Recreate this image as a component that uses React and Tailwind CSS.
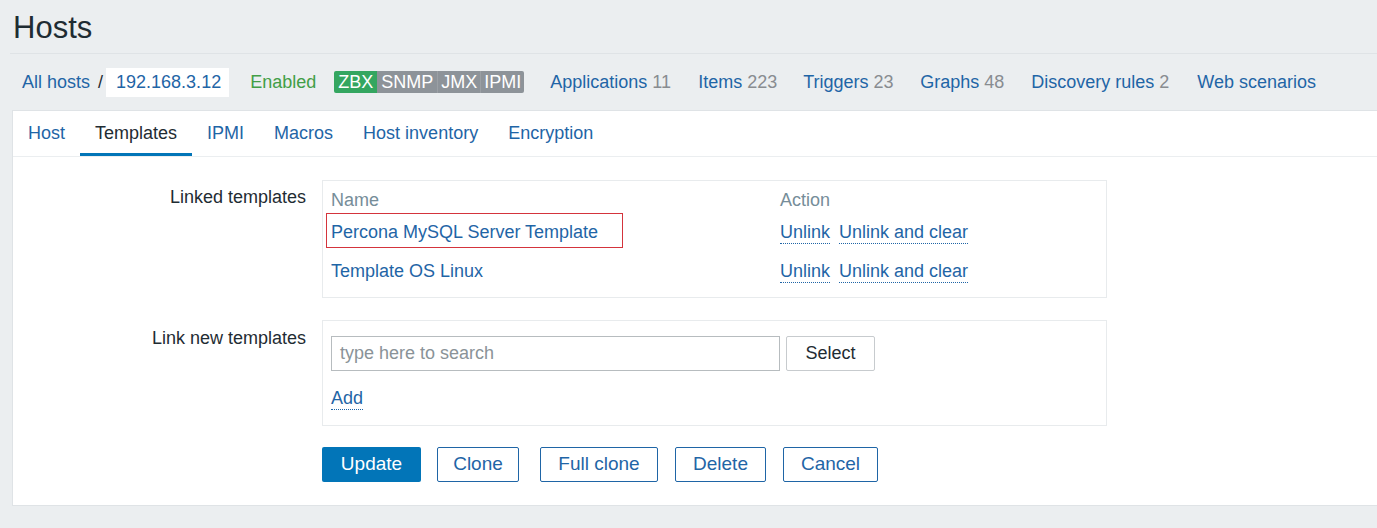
export default function App() {
  const font = { fontFamily: '"Liberation Sans", Arial, sans-serif' };
  const nav = [
    ["Applications", "11", "w-[148px]"],
    ["Items", "223", "w-[105px]"],
    ["Triggers", "23", "w-[117px]"],
    ["Graphs", "48", "w-[111px]"],
    ["Discovery rules", "2", "w-[166px]"],
    ["Web scenarios", null, ""],
  ];
  const tabs = ["Host", "Templates", "IPMI", "Macros", "Host inventory", "Encryption"];
  const ActionLinks = () => (
    <div className="pl-[4px] flex text-[#1f65a6] mt-[3px]">
      <span className="leading-[21px] border-b border-dotted border-[#1f65a6]">Unlink</span>
      <span className="ml-[9px] leading-[21px] border-b border-dotted border-[#1f65a6]">Unlink and clear</span>
    </div>
  );
  return (
    <div style={font} className="w-[1377px] h-[528px] bg-[#ebeef0] text-[18px] text-[#1f2c33] overflow-hidden">
      {/* Title */}
      <div className="pl-[13px] pt-[10px] pb-[6px] h-[53px]">
        <h1 className="text-[31px] leading-[36px] font-normal text-[#1f2c33]">Hosts</h1>
      </div>
      <div className="ml-[10px] border-t border-[#dfe3e6]" />
      {/* Nav row */}
      <div className="h-[56px] flex items-center pl-[22px] whitespace-nowrap">
        <span className="text-[#1f65a6]">All hosts</span>
        <span className="ml-[8px] mr-[3px] text-[#1f2c33]">/</span>
        <span className="h-[29px] flex items-center bg-white pl-[10px] pr-[8px] text-[#1f65a6]">192.168.3.12</span>
        <span className="ml-[21px] text-[#429e47]">Enabled</span>
        <span className="ml-[18px] flex h-[22px] leading-[22px] rounded-[2px] overflow-hidden text-white">
          <span className="bg-[#34a660] w-[43px] text-center">ZBX</span>
          <span className="bg-[#8d9399] w-[60px] text-center">SNMP</span>
          <span className="bg-[#8d9399] w-[43px] text-center border-l border-[#9ba0a5]">JMX</span>
          <span className="bg-[#8d9399] w-[44px] text-center border-l border-[#9ba0a5]">IPMI</span>
        </span>
        <div className="ml-[26px] flex">
          {nav.map(([label, count, w]) => (
            <span key={label} className={w}>
              <span className="text-[#1f65a6]">{label}</span>
              {count && <span className="text-[#888c90]"> {count}</span>}
            </span>
          ))}
        </div>
      </div>
      {/* Panel */}
      <div className="ml-[12px] bg-white border-t border-l border-b border-[#dfe3e6] h-[396px]">
        <div className="h-[46px] flex border-b border-[#ebeef0]">
          {tabs.map((t) => (
            <div
              key={t}
              className={
                "px-[15px] flex items-center border-b-[3px] " +
                (t === "Templates" ? "border-[#0275b8] text-[#1f2c33]" : "border-transparent text-[#1f65a6]")
              }
            >
              <span className="mt-[3px]">{t}</span>
            </div>
          ))}
        </div>
        <div className="pt-[23px]">
          {/* Linked templates */}
          <div className="flex">
            <div className="w-[293px] text-right pt-[5px] leading-[24px]">Linked templates</div>
            <div className="ml-[16px] w-[785px] border border-[#e8ebed] pl-[4px] pt-[3px] pb-[10px]">
              <div className="flex h-[30px] items-center text-[#768d99]">
                <div className="w-[449px] pl-[4px] mt-[2px]">Name</div>
                <div className="pl-[4px] mt-[2px]">Action</div>
              </div>
              <div className="relative flex h-[34px] items-center">
                <div className="absolute left-[-1px] top-[-1px] w-[297px] h-[35px] border border-[#d4343c]" />
                <div className="w-[449px] pl-[4px] text-[#1f65a6] mt-[2px]">Percona MySQL Server Template</div>
                <ActionLinks />
              </div>
              <div className="flex h-[34px] mt-[5px] items-center">
                <div className="w-[449px] pl-[4px] text-[#1f65a6] mt-[2px]">Template OS Linux</div>
                <ActionLinks />
              </div>
            </div>
          </div>
          {/* Link new templates */}
          <div className="flex mt-[22px]">
            <div className="w-[293px] text-right pt-[6px] leading-[24px]">Link new templates</div>
            <div className="ml-[16px] w-[785px] h-[106px] border border-[#e8ebed] pl-[8px] pt-[15px]">
              <div className="flex">
                <div className="w-[449px] h-[35px] border border-[#b7bcbf] flex items-center pl-[8px] text-[#8a9398]">
                  type here to search
                </div>
                <div className="ml-[6px] w-[89px] h-[35px] border border-[#c7cbce] rounded-[2px] flex items-center justify-center text-[#1f2c33]">
                  Select
                </div>
              </div>
              <div className="mt-[14px]">
                <span className="inline-block leading-[22px] text-[#1f65a6] border-b border-dotted border-[#1f65a6]">Add</span>
              </div>
            </div>
          </div>
          {/* Buttons */}
          <div className="flex mt-[21px] ml-[309px] text-[19px]">
            <div className="w-[99px] h-[35px] rounded-[2px] bg-[#0275b8] text-white flex items-center justify-center">Update</div>
            <div className="ml-[16px] w-[82px] h-[35px] rounded-[2px] border border-[#1f65a6] text-[#1f65a6] flex items-center justify-center">Clone</div>
            <div className="ml-[21px] w-[118px] h-[35px] rounded-[2px] border border-[#1f65a6] text-[#1f65a6] flex items-center justify-center">Full clone</div>
            <div className="ml-[17px] w-[91px] h-[35px] rounded-[2px] border border-[#1f65a6] text-[#1f65a6] flex items-center justify-center">Delete</div>
            <div className="ml-[17px] w-[95px] h-[35px] rounded-[2px] border border-[#1f65a6] text-[#1f65a6] flex items-center justify-center">Cancel</div>
          </div>
        </div>
      </div>
    </div>
  );
}
